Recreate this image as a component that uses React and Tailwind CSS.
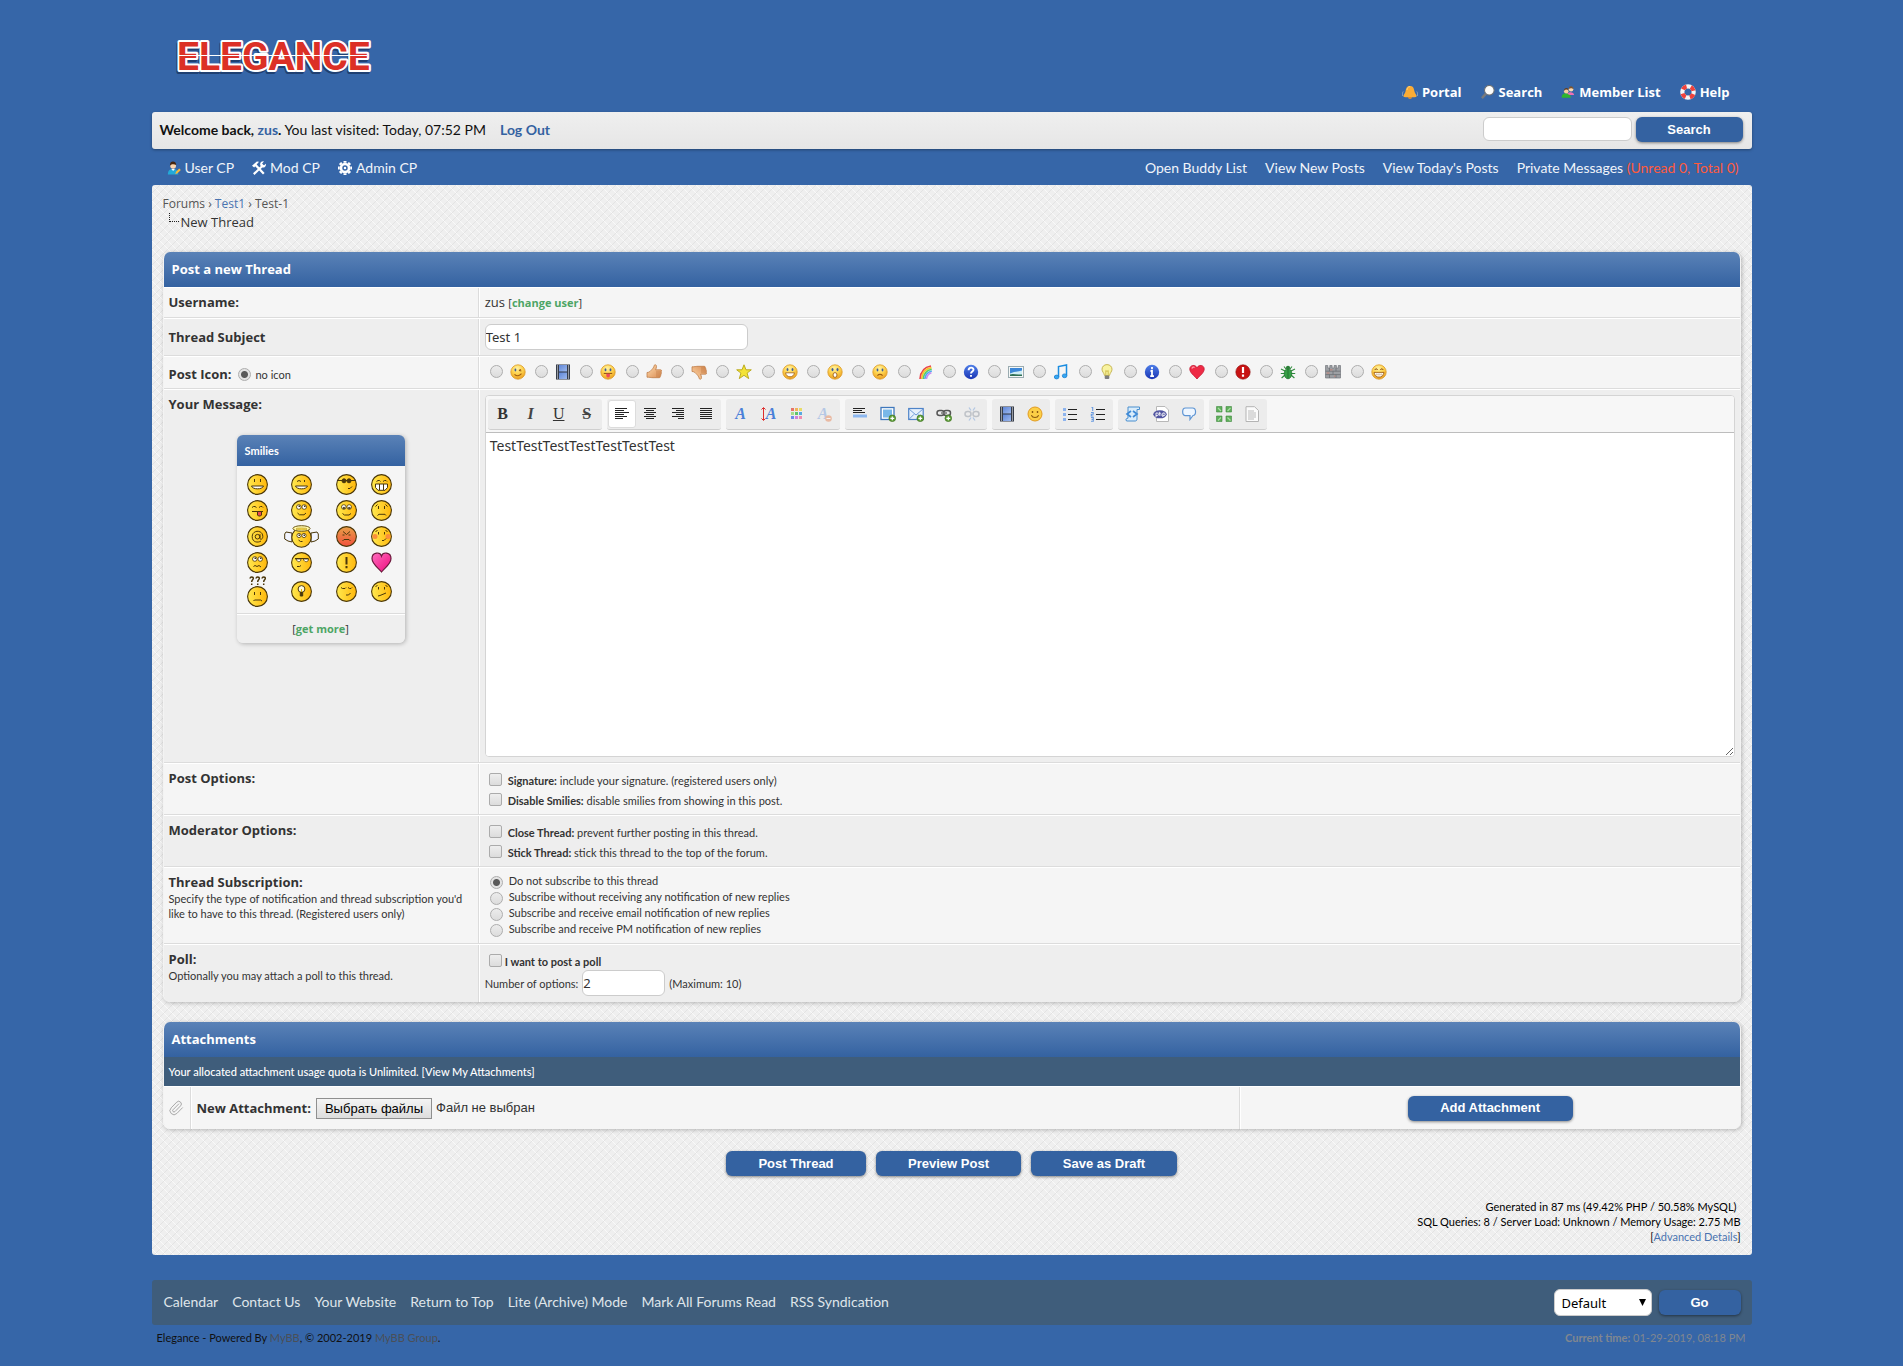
import React from "react";
import { Paperclip } from "lucide-react";

const SMALL = "font-[Lato,'Open_Sans',sans-serif] text-[11px] leading-[15px]";
const BTN =
  "flex h-[25px] items-center justify-center rounded-[6px] bg-[#3462a1] font-['Liberation_Sans',Arial,sans-serif] text-[13px] font-bold text-white shadow-[0_1px_3px_rgba(0,0,0,0.45)]";
const FIELD =
  "rounded-[6px] border border-[#cccccc] bg-white font-['Noto_Sans',sans-serif] text-[#333] outline-none";
const RADIO =
  "h-[13px] w-[13px] shrink-0 appearance-none rounded-full border border-[#adadad] bg-[linear-gradient(#ececec,#dcdcdc)] checked:bg-[radial-gradient(circle,#5a5a5a_0_3px,#e4e4e4_4px)]";
const CHECK =
  "h-[13px] w-[13px] shrink-0 appearance-none rounded-[2px] border border-[#ababab] bg-[linear-gradient(#eeeeee,#dcdcdc)] checked:bg-[#666]";

/* ---------- small 16px drawings ---------- */

function Svg({ children, size = 16, ...rest }) {
  return (
    <svg width={size} height={size} viewBox="0 0 16 16" fill="none" aria-hidden="true" {...rest}>
      {children}
    </svg>
  );
}

function Defs() {
  return (
    <svg width="0" height="0" className="absolute" aria-hidden="true">
      <defs>
        <radialGradient id="gFace" cx="0.45" cy="0.25" r="0.8">
          <stop offset="0" stopColor="#fff2a0" />
          <stop offset="0.5" stopColor="#fdd04a" />
          <stop offset="1" stopColor="#e8951c" />
        </radialGradient>
        <linearGradient id="gSmile" x1="0" x2="1">
          <stop offset="0" stopColor="#ffe94f" />
          <stop offset="1" stopColor="#ffb70c" />
        </linearGradient>
        <linearGradient id="gAngry" x1="0" x2="0" y1="0" y2="1">
          <stop offset="0" stopColor="#e8a047" />
          <stop offset="1" stopColor="#f2513e" />
        </linearGradient>
        <linearGradient id="gHeart" x1="0" x2="1" y1="0" y2="1">
          <stop offset="0" stopColor="#ff6ec0" />
          <stop offset="1" stopColor="#ee0a7c" />
        </linearGradient>
        <linearGradient id="gBlue" x1="0" x2="0" y1="0" y2="1">
          <stop offset="0" stopColor="#4f7fe8" />
          <stop offset="1" stopColor="#1a35b5" />
        </linearGradient>
        <linearGradient id="gSkin" x1="0" x2="1" y1="0" y2="1">
          <stop offset="0" stopColor="#ffdcae" />
          <stop offset="1" stopColor="#d98b52" />
        </linearGradient>
        <linearGradient id="gFilm" x1="0" x2="1" y1="0" y2="1">
          <stop offset="0" stopColor="#5f86d8" />
          <stop offset="1" stopColor="#9db9ee" />
        </linearGradient>
      </defs>
    </svg>
  );
}

function Face({ kind }) {
  const eye = "#3d5c9c";
  return (
    <Svg>
      <circle cx="8" cy="8" r="7.2" fill="url(#gFace)" stroke="#dc9a26" strokeWidth="0.8" />
      {kind === "wink" && (
        <>
          <ellipse cx="5.4" cy="6" rx="0.9" ry="1.4" fill={eye} />
          <path d="M9 6.4l2-1M9 6.4l2.4.6M4.5 10.3c2 2 5 2 7-.6" stroke="#a05d10" strokeWidth="1.1" />
        </>
      )}
      {kind === "tongue" && (
        <>
          <ellipse cx="5.5" cy="5.8" rx="0.9" ry="1.5" fill={eye} />
          <ellipse cx="10.5" cy="5.8" rx="0.9" ry="1.5" fill={eye} />
          <path d="M3.8 9.4h8.4" stroke="#8a4a10" />
          <path d="M6.3 9.8h3.6v2a1.8 1.8 0 01-3.6 0z" fill="#ee4a5a" />
        </>
      )}
      {kind === "smile" && (
        <>
          <ellipse cx="5.5" cy="5.5" rx="0.9" ry="1.5" fill={eye} />
          <ellipse cx="10.5" cy="5.5" rx="0.9" ry="1.5" fill={eye} />
          <path d="M3.6 8.8h8.8c-.4 2.6-2 4-4.4 4s-4-1.400-4.400-4z" fill="#fff" stroke="#a05d10" strokeWidth="0.8" />
        </>
      )}
      {kind === "shock" && (
        <>
          <ellipse cx="5.5" cy="5.6" rx="1" ry="1.6" fill={eye} />
          <ellipse cx="10.500" cy="5.6" rx="1" ry="1.6" fill={eye} />
          <ellipse cx="8" cy="11" rx="2" ry="2.400" fill="#fff" stroke="#a05d10" strokeWidth="0.9" />
        </>
      )}
      {kind === "sad" && (
        <>
          <ellipse cx="5.5" cy="6" rx="0.9" ry="1.4" fill={eye} />
          <ellipse cx="10.5" cy="6" rx="0.9" ry="1.4" fill={eye} />
          <path d="M5.400 11.600c1.400-1.600 3.800-1.600 5.200 0" stroke="#a05d10" strokeWidth="1.1" />
        </>
      )}
      {kind === "grin" && (
        <>
          <path d="M3.800 6c.6-1.600 2.200-1.600 2.800 0M9.400 6c.6-1.600 2.200-1.600 2.800 0" stroke="#8a4a10" />
          <path d="M3 8.400h10c-.3 3-2.200 4.800-5 4.800s-4.700-1.800-5-4.800z" fill="#fff" stroke="#a05d10" strokeWidth="0.9" />
          <path d="M3.500 10.500h9M5.800 8.500v4M8 8.500v4.500M10.200 8.500v4" stroke="#c9a77a" strokeWidth="0.5" />
        </>
      )}
    </Svg>
  );
}

function Film() {
  return (
    <Svg>
      <rect x="1" y="0.500" width="14" height="15" fill="#2c3340" />
      <rect x="4" y="1" width="8" height="6.500" fill="url(#gFilm)" />
      <rect x="4" y="8.500" width="8" height="6.500" fill="url(#gFilm)" />
      <path d="M2.500 1.500v14M13.500 1.500v14" stroke="#fff" strokeWidth="1.200" strokeDasharray="1 1" />
    </Svg>
  );
}

const THUMB =
  "M1 8.500c1.500 0 2.600-.5 3.700-1.800C6 5.300 7.700 4 8.400 1.200 8.700.3 10.600.6 10.500 2.600c0 1.300-.5 2.300-.9 3.200h5c1.300.1 1.300 1.800.2 2.100 1 .4.900 1.900-.2 2.100.7.500.5 1.800-.5 2 .5.700.1 1.700-.9 1.700H7c-2 0-3.500-.5-6-.5z";
const thumb = (
  <>
    <path d={THUMB} fill="url(#gSkin)" stroke="#b9733c" strokeWidth="0.7" />
    <path d="M10 8h4.500M10 10h4.300M10 12h4" stroke="#b9733c" strokeWidth="0.6" />
  </>
);

const postIcons = [
  ["Wink", <Face kind="wink" />],
  ["Video", <Film />],
  ["Tongue", <Face kind="tongue" />],
  ["Thumbs Up", <Svg>{thumb}</Svg>],
  ["Thumbs Down", <Svg><g transform="translate(0 16) scale(1 -1)">{thumb}</g></Svg>],
  ["Star", <Svg><path d="M8 .8l2 5h5.300l-4.200 3.300 1.600 5.500L8 11.300l-4.700 3.300 1.600-5.500L.7 5.800H6z" fill="#f4e337" stroke="#b5a516" strokeWidth="0.9" /></Svg>],
  ["Smile", <Face kind="smile" />],
  ["Shocked", <Face kind="shock" />],
  ["Sad", <Face kind="sad" />],
  [
    "Rainbow",
    <Svg>
      <path d="M2 15C2.500 8.500 6 3 13 2" stroke="#e9404a" strokeWidth="1.600" />
      <path d="M3.600 15C4 9.500 7.200 4.600 13.500 3.600" stroke="#f8c22c" strokeWidth="1.600" />
      <path d="M5.200 15c.5-4.500 3.300-8.700 8.500-9.700" stroke="#56cf64" strokeWidth="1.600" />
      <path d="M6.800 15c.4-3.700 2.700-7 7-8" stroke="#4fa9f0" strokeWidth="1.600" />
      <path d="M8.400 15c.4-2.700 2-5.300 5-6.300" stroke="#c98cf0" strokeWidth="1.600" />
    </Svg>,
  ],
  ["Question", <Svg><circle cx="8" cy="8" r="7.200" fill="url(#gBlue)" /><path d="M5.600 6.200c.1-3.400 5-3.200 4.900-.4 0 1.700-2.500 1.900-2.500 3.700M8 10.900v1.800" stroke="#fff" strokeWidth="1.900" /></Svg>],
  ["Photo", <Svg><rect x="0.500" y="2.500" width="15" height="11" fill="#f4f7f7" stroke="#9aabb0" /><rect x="2" y="4" width="12" height="8" fill="#3c87d8" /><path d="M2 12V9.500C6 7 10 8 14 6.500V12z" fill="#cfeef5" /><path d="M2 12v-1.500c3-1.500 7 .5 12 0V12z" fill="#2f6f54" /></Svg>],
  ["Music", <Svg><path d="M5.500 13V2.600l8-1.600v10.500" stroke="#1b8de0" strokeWidth="1.500" /><ellipse cx="3.600" cy="13" rx="2.300" ry="1.900" fill="#35a7f2" stroke="#1b7fd0" strokeWidth="0.800" /><ellipse cx="11.600" cy="11.800" rx="2.300" ry="1.900" fill="#35a7f2" stroke="#1b7fd0" strokeWidth="0.800" /></Svg>],
  ["Lightbulb", <Svg><path d="M8 .6c3 0 5 2.100 5 4.700 0 2.300-2 3.500-2.500 6.200h-5C5 8.800 3 7.600 3 5.300 3 2.700 5 .6 8 .6z" fill="#f8f3a0" stroke="#bfae4a" strokeWidth="0.900" /><path d="M6.800 11V6.500L8 7.500l1.200-1V11" stroke="#c9b23a" strokeWidth="0.800" /><rect x="5.700" y="11.500" width="4.600" height="3.600" rx="1" fill="#7e7e7e" /></Svg>],
  ["Information", <Svg><circle cx="8" cy="8" r="7.200" fill="url(#gBlue)" /><path d="M8 3v2.200M6.500 7H8v5M6.200 12.200h3.800" stroke="#fff" strokeWidth="1.800" /></Svg>],
  ["Heart", <Svg><path d="M8 15C5 11.500.8 8.700.8 5 .8.800 6.400.200 8 3.800 9.600.200 15.200.800 15.200 5c0 3.700-4.200 6.500-7.200 10z" fill="#ee2a45" stroke="#c3152f" strokeWidth="0.800" /><path d="M3 4.600C3.200 3 4.800 2.800 5.600 3.400" stroke="#ff9aa8" strokeWidth="1.200" /></Svg>],
  ["Exclamation", <Svg><circle cx="8" cy="8" r="7.200" fill="#c81414" stroke="#8e0d0d" strokeWidth="0.600" /><path d="M8 3v6M8 10.500v2.200" stroke="#fff" strokeWidth="2.200" /></Svg>],
  ["Bug", <Svg><path d="M4 2.500L6 5M12 2.500L10 5M1 5l4 2M15 5l-4 2M.8 9.500H15.200M1.600 14l3.400-3M14.400 14l-3.400-3" stroke="#2f8a3c" strokeWidth="1.100" /><ellipse cx="8" cy="9.600" rx="3.800" ry="5.200" fill="#36a046" stroke="#1f6d2c" strokeWidth="0.700" /><circle cx="8" cy="3.800" r="2.100" fill="#2b7f38" /><path d="M8 5.500v9" stroke="#1f6d2c" strokeWidth="0.800" /></Svg>],
  ["Brick", <Svg><path d="M.5 14V1.500h2.300V4h2V1.500h2.300V4h2V1.500h2.300V4h1.900V1.500h2.200V14z" fill="#9c9fa3" stroke="#74777c" strokeWidth="0.700" /><path d="M.5 7.200h15M.5 10.600h15M4.500 4v3.200M11 4v3.200M8 7.200v3.400M4.500 10.600V14M11 10.600V14" stroke="#686b70" strokeWidth="0.700" /><path d="M5 5.700h2.500M1.500 9h3M9 12.300h1.500" stroke="#b58a84" strokeWidth="1.500" /></Svg>],
  ["Grin", <Face kind="grin" />],
];

/* ---------- 21px smilies ---------- */

const S = "#4a370a";

function Smiley({ fill = "url(#gSmile)", children }) {
  return (
    <svg width="21" height="21" viewBox="0 0 21 21" fill="none" stroke={S} strokeWidth="1" aria-hidden="true">
      <circle cx="10.500" cy="10.500" r="9.900" fill={fill} strokeWidth="1.100" />
      {children}
    </svg>
  );
}

const eyesOpen = (
  <>
    <circle cx="7.800" cy="7" r="2.300" fill="#fff" strokeWidth="0.800" />
    <circle cx="13.200" cy="7" r="2.300" fill="#fff" strokeWidth="0.800" />
    <path d="M7.500 5.500H9v1.500H7.500zM13 5.500h1.500v1.500H13z" fill={S} stroke="none" />
  </>
);

const smilies = [
  ["Smile", <Smiley><path d="M7.500 5v3M13.500 5v3" /><path d="M4.500 12h12c-1 3.800-11 3.800-12 0z" fill="#fff" /></Smiley>],
  ["Wink", <Smiley><path d="M6 7.500l2-1 2 1M13.500 6v2" /><path d="M4.500 12h12c-1 3.800-11 3.800-12 0z" fill="#fff" /></Smiley>],
  ["Cool", <Smiley><path d="M1.500 6.500h18" /><circle cx="8" cy="6.800" r="2" fill={S} /><circle cx="13" cy="6.800" r="2" fill={S} /><path d="M12 14.500h2l2-2" /></Smiley>],
  ["Big Grin", <Smiley><path d="M5.500 7.500l1.500-1h1.500l1 1M12 7.500l1.500-1H15l1 1" /><path d="M4.500 10h12v3.500l-2.500 2.800H7l-2.500-2.800zM8.500 10v6M12.500 10v6" fill="#fff" /></Smiley>],
  ["Tongue", <Smiley><path d="M5 7.500l1.500-1H8l1.500 1M12 7.500l1.500-1H15l1 1M5 11.500h11" /><path d="M10.500 11.500h4v3.500l-1 1h-2l-1-1z" fill="#ee4a52" /></Smiley>],
  ["Rolleyes", <Smiley>{eyesOpen}<path d="M6.500 13l2 1.800h4.500l2-1.800" /></Smiley>],
  ["Shy", <Smiley><circle cx="7.800" cy="7" r="2.300" fill="#fff" strokeWidth="0.800" /><circle cx="13.200" cy="7" r="2.300" fill="#fff" strokeWidth="0.800" /><path d="M7 7.300h1.800v1.500H7zM12.400 7.300h1.800v1.500h-1.800z" fill={S} strokeWidth="0.500" /><path d="M6.500 13.500l2 1.500H13l2-1.500" /></Smiley>],
  ["Sad", <Smiley><path d="M4.500 6.500l2-2M16.500 6.500l-2-2M7.500 6v3M13.500 6v3M6.500 15.500l1.500-1.200h6l1 1.200" /></Smiley>],
  ["At", <Smiley><circle cx="10.500" cy="10.700" r="2.300" /><path d="M13 8.200v4.500c1 1.300 2.800.3 2.800-2.200 0-7-10.600-7-10.600.2 0 5.800 5.800 6.300 8.800 4.300" /></Smiley>],
  [
    "Angel",
    <svg width="35" height="23" viewBox="0 0 35 23" fill="none" stroke={S} strokeWidth="1" aria-hidden="true">
      <path d="M8 8L2 7 .7 9v5L4 16l4 1zM27 8l6-1 1.300 2v5L31 16l-4 1z" fill="#f1f4ff" />
      <circle cx="17.500" cy="12.500" r="9.700" fill="url(#gSmile)" strokeWidth="1.100" />
      <ellipse cx="17.500" cy="3.500" rx="8.600" ry="2.800" fill="#fff6a4" stroke="#6e5a1a" />
      <ellipse cx="17.500" cy="4" rx="5.500" ry="1" fill="#ffe34f" stroke="#a68c28" strokeWidth="0.600" />
      <circle cx="15" cy="10.500" r="2.100" fill="#fff" strokeWidth="0.800" />
      <circle cx="20" cy="10.500" r="2.100" fill="#fff" strokeWidth="0.800" />
      <path d="M14.500 9.500H16v1.400h-1.500zM19.500 9.500H21v1.400h-1.500z" fill={S} stroke="none" />
      <path d="M14.500 15l2 1.500h2" />
    </svg>,
  ],
  ["Angry", <Smiley fill="url(#gAngry)"><path d="M7 5.500l3.500 3L14 5.500M6.500 9h2M12.500 9h2M6.500 15l1.500-1.500h5l1.500 1.500" /></Smiley>],
  ["Blush", <Smiley><circle cx="4" cy="10.500" r="2.500" fill="#fb8f3a" stroke="none" /><circle cx="17" cy="10.500" r="2.500" fill="#fb8f3a" stroke="none" /><path d="M4.500 6l2-2M16.500 6l-2-2M7.500 6v2.500M13.500 6v2.500M11 14.500h2l2-2" /></Smiley>],
  ["Confused", <Smiley>{eyesOpen}<path d="M6.500 14.500l1.500-1 2 1 2-1 2 1.500" /></Smiley>],
  ["Dodgy", <Smiley><path d="M4.500 7H10c0 3.500-4 3.500-4.500.5zM12 7h5.500c0 3.500-4 3.500-5 .5z" fill="#fff" strokeWidth="0.800" /><path d="M4 6.500h13.500M6 14.500h2.500l1.500-1" /></Smiley>],
  ["Exclamation", <Smiley><path d="M10.500 5v7.500M10.500 14v2.200" strokeWidth="2" /></Smiley>],
  ["Heart", <svg width="21" height="21" viewBox="0 0 21 21" aria-hidden="true"><path d="M10.500 20C7 15.500 1 12 1 6.500 1-.3 9.300-.3 10.500 4 11.700-.3 20-.3 20 6.500 20 12 14 15.500 10.500 20z" fill="url(#gHeart)" stroke="#6b1a3c" strokeWidth="1.200" /></svg>],
  [
    "Huh",
    <span className="flex flex-col items-center">
      <svg width="17" height="10" viewBox="0 0 17 10" fill="none" stroke={S} strokeWidth="1.500" aria-hidden="true">
        <path d="M1 2.500C1.300.3 4.500.5 4.300 2.500 4.200 3.800 2.700 4 2.700 6M2.700 7.500V9M7 2.500C7.300.3 10.500.5 10.300 2.500 10.200 3.800 8.700 4 8.700 6M8.700 7.500V9M13 2.500c.3-2.200 3.500-2 3.300 0-.1 1.300-1.600 1.500-1.600 3.500M14.700 7.500V9" />
      </svg>
      <Smiley><path d="M7.500 6v3M13.500 6v3M6.500 15l1-1h6l1.500 1" /></Smiley>
    </span>,
  ],
  ["Idea", <Smiley><circle cx="10.500" cy="8" r="3.400" fill="#fffce0" /><path d="M9.300 11.500h2.400v3.500H9.300z" fill={S} /><path d="M10.500 8v3" stroke="#e4b400" /></Smiley>],
  ["Sleepy", <Smiley><path d="M5 6.500l1.500 1H9l1-1M12 6.500l1.500 1H15l1-1M10 14h2.500l2-2" /></Smiley>],
  ["Undecided", <Smiley><path d="M4.500 5.500l2-1M16.500 5.500l-2-1M7.500 6v2.500M13.500 6v2.500M7 15l2-.5L15 12" /></Smiley>],
];

/* ---------- editor toolbar ---------- */

const lines = (rows) => (
  <Svg>
    {rows.map(([x, w], i) => (
      <path key={i} d={`M${x} ${2.5 + i * 2}h${w}`} stroke="#222" />
    ))}
  </Svg>
);
const letter = (cls, ch) => (
  <span className={`font-['Liberation_Serif',serif] text-[16px] leading-[16px] ${cls}`}>{ch}</span>
);
const plus = (
  <>
    <circle cx="12.300" cy="12.300" r="3.300" fill="#5f9e38" stroke="#3e7420" strokeWidth="0.700" />
    <path d="M12.300 10.400v3.800M10.400 12.300h3.800" stroke="#fff" strokeWidth="1.200" />
  </>
);
const arrowBlock = (x, y) => <path d={`M${x} ${y}h5.500v5.500h-5.500z`} fill="#5fae5a" stroke="#3f8a40" strokeWidth="0.600" />;

const toolbar = [
  [
    ["Bold", letter("font-bold text-[#333]", "B")],
    ["Italic", letter("font-bold italic text-[#444]", "I")],
    ["Underline", letter("text-[#333] underline", "U")],
    ["Strikethrough", letter("font-bold text-[#444] line-through", "S")],
  ],
  [
    ["Align left", lines([[1, 12], [1, 9], [1, 14], [1, 9], [1, 12], [1, 8]])],
    ["Center", lines([[2, 12], [4, 8], [2, 12], [4, 8], [2, 12], [4, 8]])],
    ["Align right", lines([[2, 12], [6, 8], [2, 12], [6, 8], [2, 12], [8, 6]])],
    ["Justify", lines([[2, 12], [2, 12], [2, 12], [2, 12], [2, 12], [2, 12]])],
  ],
  [
    ["Font Name", letter("font-bold italic text-[#4a80d8]", "A")],
    ["Font Size", <span className="flex items-center"><svg width="5" height="14" viewBox="0 0 5 14" fill="none" aria-hidden="true"><path d="M2.500 1v12M.5 2.500L2.500.5l2 2M.5 11.500l2 2 2-2" stroke="#dd2c2c" /></svg>{letter("font-bold italic text-[#4a80d8]", "A")}</span>],
    [
      "Font Color",
      <Svg>
        {["#e87468", "#f0b45c", "#e8dc68", "#a8dc8c", "#62c46c", "#58a8e0", "#6c8ce8", "#d080dc", "#f08cb0"].map((c, i) => (
          <rect key={c} x={2 + (i % 3) * 4} y={2 + Math.floor(i / 3) * 4} width="3" height="3" fill={c} />
        ))}
      </Svg>,
    ],
    ["Remove Formatting", <span className="flex items-end opacity-50">{letter("font-bold italic text-[#7fa6e0]", "A")}<svg width="7" height="7" viewBox="0 0 7 7" className="-ml-1" aria-hidden="true"><circle cx="3.500" cy="3.500" r="3.300" fill="#e88a5c" /><path d="M1.500 3.500h4" stroke="#fff" /></svg></span>],
  ],
  [
    ["Insert a horizontal rule", <Svg><path d="M1 2.500h12M1 4.500h9M1 6.500h12" stroke="#222" /><rect x="1" y="8.500" width="14" height="3" fill="#8db8f0" /></Svg>],
    ["Insert an image", <Svg><rect x="1" y="1.500" width="13" height="12" fill="#fff" stroke="#3f78bc" strokeWidth="1.300" /><rect x="3" y="3.500" width="9" height="8" fill="#79b8e8" />{plus}</Svg>],
    ["Insert an email", <Svg><rect x="0.700" y="2.500" width="14.500" height="11" fill="#e6f0fc" stroke="#4f84c8" strokeWidth="1.200" /><path d="M1 3l7 6 7-6M1 13.300l5-5M15 13.300l-5-5" stroke="#6f9cd8" />{plus}</Svg>],
    ["Insert a link", <Svg><rect x="1" y="4.500" width="7" height="5" rx="2.500" stroke="#555" strokeWidth="1.500" /><rect x="7.500" y="4.500" width="7" height="5" rx="2.500" stroke="#555" strokeWidth="1.500" /><path d="M5 7h6" stroke="#777" strokeWidth="1.400" />{plus}</Svg>],
    ["Unlink", <Svg opacity="0.450"><rect x="1" y="5.500" width="6" height="5" rx="2.500" stroke="#8a929e" strokeWidth="1.500" /><rect x="9" y="5.500" width="6" height="5" rx="2.500" stroke="#8a929e" strokeWidth="1.500" /><path d="M5 1.500l2 3M11 1.500l-2 3M5 14.500l2-3M11 14.500l-2-3" stroke="#6f9cd8" strokeWidth="1.300" /></Svg>],
  ],
  [
    ["Insert a video", <Film />],
    ["Insert an emoticon", <Svg><circle cx="8" cy="8" r="7" fill="#fccf46" stroke="#e09a20" /><path d="M5.500 5v2M10.500 5v2" stroke="#8a5a10" strokeWidth="1.400" /><path d="M4.300 9.300c1.400 3 6 3 7.400 0" stroke="#8a5a10" strokeWidth="1.100" /></Svg>],
  ],
  [
    ["Bullet list", <Svg><path d="M1 2h3v3H1zM1 7h3v3H1zM1 12h3v3H1z" fill="#8db4ee" /><path d="M6 3.500h9M6 8.500h9M6 13.500h9" stroke="#222" /></Svg>],
    ["Numbered list", <Svg><path d="M1.500 1.500h1.200V5M1 6.500h2.200v1.700H1.300V10H3.500M1 11.500h2.300v3.800H1M1.500 13.400h1.800" stroke="#6a9be0" strokeWidth="1.100" /><path d="M6 3.500h9M6 8.500h9M6 13.500h9" stroke="#222" /></Svg>],
  ],
  [
    ["Code", <Svg><path d="M3 1h11.500v2.500H12V13c0 1.500-.8 2-2 2H1.500c-1.300-1.800 0-2.800 1.500-2.800z" fill="#d9ecfb" stroke="#4b8fce" /><path d="M6 5L2 8l4 3M8 5l4 3-4 3" stroke="#3f8ad6" strokeWidth="1.700" /></Svg>],
    ["PHP", <Svg><path d="M3.500.5H12L15.500 4v11.500h-12z" fill="#fff" stroke="#b8b8b8" /><ellipse cx="7" cy="8.300" rx="6.700" ry="4" fill="#5054a0" /><path d="M3 11V7h1.300c1.400 0 1.400 2.600 0 2.600H3M6.300 5.800v4M6.300 7.500c2-1 1.800.5 1.800 2.300M9.800 11V7h1.300c1.400 0 1.400 2.600 0 2.600H9.800" stroke="#fff" strokeWidth="0.900" /></Svg>],
    ["Insert a Quote", <Svg><path d="M4.500 2h7C15.500 2 15.500 9.500 12 9.500L9 13.500V9.600H4.500C.7 9.600.7 2 4.500 2z" fill="#eef6ff" stroke="#5e95d4" strokeWidth="1.200" /></Svg>],
  ],
  [
    ["Maximize", <Svg>{arrowBlock(0.5, 0.5)}{arrowBlock(10, 0.5)}{arrowBlock(0.5, 10)}{arrowBlock(10, 10)}<path d="M2 2l3 3M14.500 2l-3 3M2 14.500l3-3M14.500 14.500l-3-3" stroke="#a9e0a4" strokeWidth="1.200" /></Svg>],
    ["View source", <Svg><path d="M2 .7h8.500L14.500 4.500v11H2z" fill="#fbfbfb" stroke="#b4b4b4" /><path d="M4 5h6M4 7h8M4 9h8M4 11h8M4 13h6" stroke="#bbb" /></Svg>],
  ],
];

function Editor() {
  return (
    <div className="overflow-hidden rounded-[4px] border border-[#d4d4d4] bg-white">
      <div className="flex flex-wrap gap-[5px] border-b border-[#bdbdbd] bg-[#f7f7f7] px-[2px] pt-[3px] pb-[2px]">
        {toolbar.map((group, g) => (
          <div key={g} className="flex rounded-[3px] border-b border-[#cfcfcf] bg-[#ececec] px-px pt-px pb-px">
            {group.map(([name, icon]) => (
              <button
                key={name}
                type="button"
                title={name}
                aria-label={name}
                className={
                  name === "Align left"
                    ? "flex h-7 w-7 items-center justify-center rounded-[3px] border border-[#dcdcdc] bg-white"
                    : "flex h-7 w-7 items-center justify-center"
                }
              >
                {icon}
              </button>
            ))}
          </div>
        ))}
      </div>
      <textarea
        aria-label="Your Message"
        defaultValue="TestTestTestTestTestTestTest"
        className="block h-[323px] w-full resize-y bg-white px-1 py-[3px] font-['Noto_Sans',sans-serif] text-[14px] leading-[20px] text-[#333] outline-none"
      />
    </div>
  );
}

/* ---------- panels ---------- */

function Panel({ title, className = "", children }) {
  return (
    <section className={`overflow-hidden rounded-[7px] border-x border-[#f3f3f3] shadow-[1px_1px_4px_rgba(0,0,0,0.25)] ${className}`}>
      <h2 className="bg-linear-to-b from-[#5a82b7] to-[#3462a1] pt-[8px] pb-[9px] pl-2 text-[13px] leading-[18px] font-bold text-white">{title}</h2>
      {children}
    </section>
  );
}

function Row({ alt, label, children, className = "" }) {
  return (
    <div className={`grid min-h-[31px] grid-cols-[20%_1fr] border-t border-b border-t-white border-b-[#dcdcdc] last:border-b-0 ${alt ? "bg-[#eeeeee]" : "bg-[#f5f5f5]"}`}>
      <div className="border-r border-[#dcdcdc] p-[5px]">{label}</div>
      <div className={`border-l border-white px-[5px] ${className}`}>{children}</div>
    </div>
  );
}

function Check({ strong, text }) {
  return (
    <label className={`flex h-5 items-center gap-[6px] pl-1 ${SMALL}`}>
      <input type="checkbox" className={CHECK} />
      <span className="pt-[3px]">
        <b>{strong}</b> {text}
      </span>
    </label>
  );
}

const Title = ({ children }) => <div className="text-[13px] leading-[18px] font-bold text-[#333]">{children}</div>;

function TopLink({ icon, children }) {
  return (
    <a href="#" className="flex items-center gap-1">
      {icon}
      {children}
    </a>
  );
}

const BellIcon = <Svg><path d="M8 2c3.300 0 3.800 2.200 4.500 5.500.4 2 2.500 3.800 2 5.200-.3.800-12.700.8-13 0-.5-1.400 1.600-3.200 2-5.200C4.200 4.200 4.700 2 8 2z" fill="#fbac35" /><path d="M8 2.600C5.800 2.600 5.200 4.500 5 6" stroke="#ffd27a" /><path d="M6 13.200h4c0 2-4 2-4 0z" fill="#f7941d" /><path d="M1.200 7.500C.2 9 .2 10.500.8 12M14.800 7.500c1 1.500 1 3 .4 4.500" stroke="#8ea3bd" /></Svg>;
const LensIcon = <Svg size={14}><path d="M1 15l5-5.500" stroke="#77797c" strokeWidth="3" /><circle cx="9.500" cy="6" r="5.500" fill="#fdfdfb" stroke="#6d6f72" strokeWidth="1.200" /></Svg>;
const PeopleIcon = <Svg size={14}><path d="M.8 14.500c0-4 2-5 5-5s5 1 5.500 5z" fill="#2fb52f" /><path d="M7 10c1-2 7.500-3 8 1.500H10z" fill="#ef6fb4" /><circle cx="6" cy="7" r="2.600" fill="#f8cf9f" /><path d="M3.300 6.500c0-4 5.400-4 5.400-.5-2-1.300-3.500-1-5.400.5z" fill="#5c3b22" /><circle cx="11.500" cy="4.800" r="2.600" fill="#fbd9b0" /><path d="M8.800 4.500c0-4.500 5.800-4 5.400.5-1-1.500-3.500-2-5.400-.5z" fill="#7c5531" /></Svg>;
const BuoyIcon = <Svg><circle cx="8" cy="8" r="5.700" stroke="#f5f5f5" strokeWidth="4.200" /><circle cx="8" cy="8" r="5.700" stroke="#f0423c" strokeWidth="4.200" strokeDasharray="4.480 4.480" strokeDashoffset="-2.240" /></Svg>;
const UserIcon = <Svg size={14}><path d="M1 15.500c0-5 2-6.500 6-6.500s5 1.500 6 6.500z" fill="#23a9d8" /><path d="M5 9l2 2.500L9 9z" fill="#fff" /><circle cx="7" cy="5.500" r="3.300" fill="#fbd6ae" /><path d="M3.400 5.500C2.800-1 10.500-.5 10.600 4.500 8 3.400 5.500 3 3.400 5.500z" fill="#46260f" /><path d="M9.500 15l.8-2.800L14 8.500l1.800 1.700L12 14z" fill="#f6b93b" /></Svg>;
const ToolsIcon = <Svg size={14}><path d="M3 3.500l10.500 11" stroke="#fff" strokeWidth="2.600" /><path d="M13 4.500L2 15" stroke="#fff" strokeWidth="2.400" /><path d="M0 5.500L5.500.500l2.500.300-5.500 6.700z" fill="#fff" /><path d="M13.500.500c-2.500-.5-5 1.500-4 4.500L12 7.500c2.500.5 4.500-2 3.800-4.300L13.500 5 11.500 3z" fill="#fff" /></Svg>;
const GearIcon = <Svg size={14}><circle cx="8" cy="8" r="4.600" stroke="#fff" strokeWidth="3" /><path d="M8 0v2M8 14v2M0 8h2M14 8h2M2.300 2.300l1.600 1.600M12.100 12.100l1.600 1.600M13.700 2.300l-1.600 1.600M3.900 12.100l-1.600 1.600" stroke="#fff" strokeWidth="3.400" /><circle cx="8" cy="8" r="1.400" fill="#fff" /></Svg>;

function Logo() {
  return (
    <a href="#" aria-label="Elegance" className="ml-5 block">
      <svg width="210" height="56" viewBox="0 0 210 56" aria-hidden="true">
        <g fontFamily="Roboto, sans-serif" fontWeight="700" fontSize="39">
          <text x="4" y="46" fill="#16305c" stroke="#16305c" strokeWidth="4" strokeLinejoin="round" opacity="0.700">ELEGANCE</text>
          <text x="5" y="44" fill="#dc3026" stroke="#ffffff" strokeWidth="4" strokeLinejoin="round" paintOrder="stroke">ELEGANCE</text>
        </g>
        <path d="M7 29.500h188" stroke="#fff" />
      </svg>
    </a>
  );
}

const footerLinks = ["Calendar", "Contact Us", "Your Website", "Return to Top", "Lite (Archive) Mode", "Mark All Forums Read", "RSS Syndication"];
const subscriptions = [
  "Do not subscribe to this thread",
  "Subscribe without receiving any notification of new replies",
  "Subscribe and receive email notification of new replies",
  "Subscribe and receive PM notification of new replies",
];

export default function App() {
  return (
    <div className="min-h-screen bg-[#3666a8] px-4 font-['Open_Sans','Noto_Sans',sans-serif] text-[13px] leading-[18px] text-[#333]">
      <Defs />
      <div className="mx-auto max-w-[1600px]">
        <header className="flex min-h-28 items-end justify-between">
          <div className="pb-[30px]">
            <Logo />
          </div>
          <nav className="flex gap-[19px] pr-[22px] pb-[11px] font-bold text-white">
            <TopLink icon={BellIcon}>Portal</TopLink>
            <TopLink icon={LensIcon}>Search</TopLink>
            <TopLink icon={PeopleIcon}>Member List</TopLink>
            <TopLink icon={BuoyIcon}>Help</TopLink>
          </nav>
        </header>

        <div className="flex items-center justify-between rounded-[3px] bg-linear-to-b from-[#efefef] to-[#e6e6e6] py-[5px] pr-[9px] pl-2 shadow-[0_1px_3px_rgba(0,0,0,0.35)]">
          <p className="pb-[2px] font-[Lato,'Open_Sans',sans-serif] text-[14px] leading-[20px] text-[#111]">
            <b>
              Welcome back,{" "}
              <a href="#" className="text-[#3462a1]">zus</a>.
            </b>{" "}
            You last visited: Today, 07:52 PM
            <a href="#" className="ml-[14px] font-bold text-[#3462a1]">Log Out</a>
          </p>
          <form className="flex gap-1 pb-[2px]" onSubmit={(e) => e.preventDefault()}>
            <input aria-label="Search" className={`h-6 w-[149px] px-1 text-[13px] ${FIELD}`} />
            <button className={`w-[107px] ${BTN}`}>Search</button>
          </form>
        </div>

        <nav className="flex justify-between pt-[10px] pr-[13px] pb-2 pl-[15px] font-[Lato,'Open_Sans',sans-serif] text-[14px] text-[#f0f4fa]">
          <div className="flex gap-[18px]">
            <TopLink icon={UserIcon}>User CP</TopLink>
            <TopLink icon={ToolsIcon}>Mod CP</TopLink>
            <TopLink icon={GearIcon}>Admin CP</TopLink>
          </div>
          <div className="flex gap-[18px]">
            <a href="#">Open Buddy List</a>
            <a href="#">View New Posts</a>
            <a href="#">View Today's Posts</a>
            <a href="#">
              Private Messages <span className="text-[#ff5a3c]">(Unread 0, Total 0)</span>
            </a>
          </div>
        </nav>

        <main className="rounded-[3px] bg-[#efefef] bg-[linear-gradient(45deg,transparent_46%,#f9f9f9_46%,#f9f9f9_54%,transparent_54%),linear-gradient(-45deg,transparent_46%,#e3e3e3_46%,#e3e3e3_54%,transparent_54%)] bg-[size:8px_8px] px-[11px] pt-[10px] pb-[11px]">
          <div className="text-[12px] text-[#555]">
            <a href="#">Forums</a> › <a href="#" className="text-[#4a73b0]">Test1</a> › <a href="#">Test-1</a>
          </div>
          <div className="flex pl-[6px] text-[#333]">
            <span className="mr-[2px] h-[9px] w-[10px] border-b border-l border-dotted border-[#222]" />
            New Thread
          </div>

          <form onSubmit={(e) => e.preventDefault()}>
            <Panel title="Post a new Thread" className="mt-[21px]">
              <Row label={<Title>Username:</Title>} className="flex items-center">
                <span>
                  zus <span className="text-[11px]">[<a href="#" className="font-bold text-[#4da565]">change user</a>]</span>
                </span>
              </Row>
              <Row alt label={<label htmlFor="subject" className="flex h-[26px] items-center font-bold">Thread Subject</label>} className="flex items-center">
                <input id="subject" defaultValue="Test 1" className={`h-[26px] w-[263px] text-[13px] ${FIELD}`} />
              </Row>
              <Row
                label={
                  <div className="flex items-center gap-[7px] pt-[3px]">
                    <Title>Post Icon:</Title>
                    <label className={`flex items-center gap-1 ${SMALL}`}>
                      <input type="radio" name="icon" defaultChecked className={RADIO} />
                      no icon
                    </label>
                  </div>
                }
                className="flex items-center pb-[2px]"
              >
                <div className="flex w-[902px] items-center justify-between pl-[5px]">
                  {postIcons.map(([name, icon]) => (
                    <label key={name} title={name} className="flex items-center gap-[7px]">
                      <input type="radio" name="icon" aria-label={name} className={RADIO} />
                      {icon}
                    </label>
                  ))}
                </div>
              </Row>
              <Row
                alt
                label={
                  <>
                    <Title>Your Message:</Title>
                    <div className="mx-auto mt-[22px] w-[168px] overflow-hidden rounded-[6px] shadow-[1px_1px_4px_rgba(0,0,0,0.25)]">
                      <div className={`bg-linear-to-b from-[#5a82b7] to-[#3462a1] py-2 pl-2 font-bold text-white ${SMALL}`}>Smilies</div>
                      <div className="grid grid-cols-[28px_60px_30px_40px] grid-rows-[26px_26px_26px_26px_32px] items-center justify-items-center border-b border-[#dcdcdc] bg-[#f5f5f5] pt-[5px] pb-[6px] pl-[7px]">
                        {smilies.map(([name, icon]) => (
                          <button key={name} type="button" title={name} aria-label={name}>
                            {icon}
                          </button>
                        ))}
                      </div>
                      <div className="border-t border-white bg-[#efefef] py-[5px] text-center text-[11px]">
                        [<a href="#" className="font-bold text-[#4da565]">get more</a>]
                      </div>
                    </div>
                  </>
                }
                className="py-[5px]"
              >
                <Editor />
              </Row>
              <Row label={<Title>Post Options:</Title>} className="py-[5px]">
                <Check strong="Signature:" text="include your signature. (registered users only)" />
                <Check strong="Disable Smilies:" text="disable smilies from showing in this post." />
              </Row>
              <Row alt label={<Title>Moderator Options:</Title>} className="py-[5px]">
                <Check strong="Close Thread:" text="prevent further posting in this thread." />
                <Check strong="Stick Thread:" text="stick this thread to the top of the forum." />
              </Row>
              <Row
                label={
                  <>
                    <Title>Thread Subscription:</Title>
                    <p className={SMALL}>Specify the type of notification and thread subscription you'd like to have to this thread. (Registered users only)</p>
                  </>
                }
                className="pt-[5px] pb-[6px]"
              >
                {subscriptions.map((s, i) => (
                  <label key={s} className={`flex h-4 gap-[6px] pl-[5px] ${SMALL}`}>
                    <input type="radio" name="subscription" defaultChecked={i === 0} className={`mt-[3px] ${RADIO}`} />
                    {s}
                  </label>
                ))}
              </Row>
              <Row
                alt
                label={
                  <>
                    <Title>Poll:</Title>
                    <p className={SMALL}>Optionally you may attach a poll to this thread.</p>
                  </>
                }
                className="pt-[5px] pb-[6px]"
              >
                <label className={`flex h-5 items-center gap-[3px] pl-1 ${SMALL}`}>
                  <input type="checkbox" className={CHECK} />
                  <b className="pt-[3px]">I want to post a poll</b>
                </label>
                <div className={`flex items-center gap-1 ${SMALL}`}>
                  <label htmlFor="options">Number of options:</label>
                  <input id="options" defaultValue="2" className={`h-[26px] w-[83px] text-[13px] ${FIELD}`} />
                  (Maximum: 10)
                </div>
              </Row>
            </Panel>

            <Panel title="Attachments" className="mt-5">
              <div className={`bg-[#3f5d7b] py-[7px] pl-[5px] font-medium text-white ${SMALL}`}>
                Your allocated attachment usage quota is Unlimited. [<a href="#">View My Attachments</a>]
              </div>
              <div className="grid h-[43px] grid-cols-[27px_2.1fr_1fr] border-t border-white bg-[#f5f5f5]">
                <div className="flex items-center justify-center border-r border-[#dcdcdc] pr-[2px]">
                  <Paperclip size={16} strokeWidth={1.25} className="text-[#999]" />
                </div>
                <div className="flex items-center border-r border-l border-r-[#dcdcdc] border-l-white pl-[5px]">
                  <b className="mr-[5px]">New Attachment:</b>
                  <input id="files" type="file" multiple className="sr-only" />
                  <label
                    htmlFor="files"
                    className="border border-[#8f8f8f] bg-linear-to-b from-[#f4f4f4] to-[#dddddd] px-2 font-['Liberation_Sans',Arial,sans-serif] text-[13px] leading-[19px] text-black"
                  >
                    Выбрать файлы
                  </label>
                  <span className="ml-1 font-['Liberation_Sans',Arial,sans-serif] text-[13px]">Файл не выбран</span>
                </div>
                <div className="flex items-center justify-center border-l border-white">
                  <button className={`w-[165px] ${BTN}`}>Add Attachment</button>
                </div>
              </div>
            </Panel>

            <div className="mt-[22px] flex justify-center gap-[10px]">
              <button className={`w-[140px] ${BTN}`}>Post Thread</button>
              <button className={`w-[145px] ${BTN}`}>Preview Post</button>
              <button className={`w-[146px] ${BTN}`}>Save as Draft</button>
            </div>
          </form>

          <div className={`mt-[23px] text-right text-black ${SMALL}`}>
            <p className="pr-1">Generated in 87 ms (49.42% PHP / 50.58% MySQL)</p>
            <p>SQL Queries: 8 / Server Load: Unknown / Memory Usage: 2.75 MB</p>
            <p>[<a href="#" className="text-[#4a73b0]">Advanced Details</a>]</p>
          </div>
        </main>

        <footer>
          <div className="mt-[25px] flex items-center justify-between rounded-[3px] bg-[#3f5d7b] py-[9px] pr-[11px] pl-3">
            <nav className="flex gap-[14px] pb-[2px] font-[Lato,'Open_Sans',sans-serif] text-[14px] text-[#dfe5ea]">
              {footerLinks.map((l) => (
                <a key={l} href="#">{l}</a>
              ))}
            </nav>
            <form className="flex items-center gap-[7px]" onSubmit={(e) => e.preventDefault()}>
              <div className="relative">
                <select aria-label="Theme" className={`block h-[27px] w-[98px] appearance-none pl-[7px] text-[13px] text-black ${FIELD}`}>
                  <option>Default</option>
                </select>
                <svg width="7" height="7" viewBox="0 0 7 7" className="pointer-events-none absolute top-[10px] right-[6px]" aria-hidden="true">
                  <path d="M0 0h7L3.500 7z" fill="#000" />
                </svg>
              </div>
              <button className={`w-[82px] ${BTN}`}>Go</button>
            </form>
          </div>
          <div className="flex justify-between pt-1 pr-[6px] pl-[5px] font-[Lato,'Open_Sans',sans-serif] text-[11px] text-[#111]">
            <p>
              Elegance - Powered By <a href="#" className="text-[#4a4f57]">MyBB</a>, © 2002-2019 <a href="#" className="text-[#4a4f57]">MyBB Group</a>.
            </p>
            <p className="text-[#808790]">
              <b>Current time:</b> 01-29-2019, 08:18 PM
            </p>
          </div>
        </footer>
      </div>
    </div>
  );
}
